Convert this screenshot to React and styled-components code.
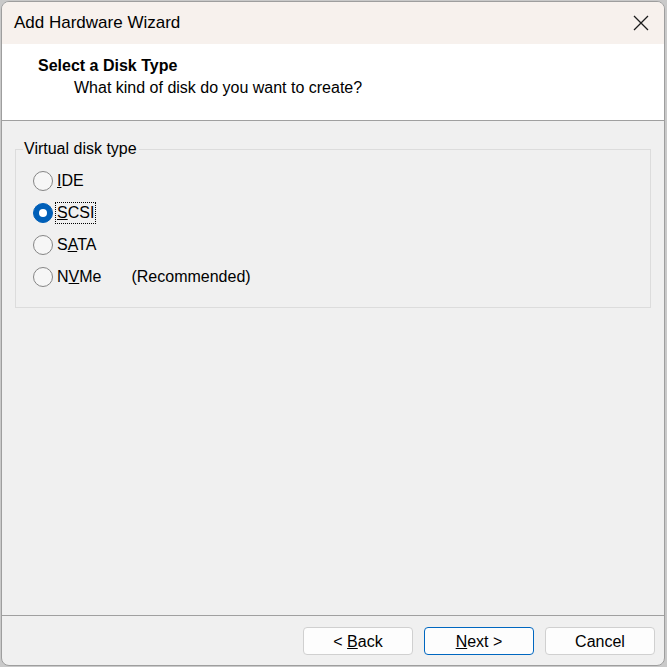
import React, { useState } from 'react'
import styled, { createGlobalStyle } from 'styled-components'

const GlobalStyle = createGlobalStyle`
    html, body {
        margin: 0;
        padding: 0;
        background: #c9c9c9;
    }
    body {
        font-family: "Liberation Sans", Arial, sans-serif;
        color: #000;
    }
`

const options = [
    { id: 'ide', label: 'IDE', key: 0 },
    { id: 'scsi', label: 'SCSI', key: 0 },
    { id: 'sata', label: 'SATA', key: 1 },
    { id: 'nvme', label: 'NVMe', key: 1, note: '(Recommended)' },
]

function Mnemonic({ text, index }) {
    return (
        <>
            {text.slice(0, index)}
            <u>{text[index]}</u>
            {text.slice(index + 1)}
        </>
    )
}

function App() {
    const [diskType, setDiskType] = useState('scsi')

    return (
        <>
            <GlobalStyle />
            <Window>
                <TitleBar>
                    <Title>Add Hardware Wizard</Title>
                    <CloseButton aria-label="Close">
                        <svg width="16" height="16" viewBox="0 0 16 16">
                            <path d="M1 1 L15 15 M15 1 L1 15" stroke="#1b1b1b" strokeWidth="1.3" fill="none" />
                        </svg>
                    </CloseButton>
                </TitleBar>
                <Header>
                    <Heading>Select a Disk Type</Heading>
                    <SubHeading>What kind of disk do you want to create?</SubHeading>
                </Header>
                <Body>
                    <GroupBox>
                        <Legend>Virtual disk type</Legend>
                        <RadioList>
                            {options.map(opt => (
                                <RadioRow key={opt.id} onClick={() => setDiskType(opt.id)}>
                                    <RadioCircle checked={diskType === opt.id} />
                                    <RadioLabel focused={diskType === opt.id}>
                                        <Mnemonic text={opt.label} index={opt.key} />
                                    </RadioLabel>
                                    {opt.note && <Note>{opt.note}</Note>}
                                </RadioRow>
                            ))}
                        </RadioList>
                    </GroupBox>
                </Body>
                <Footer>
                    <Button><span>&lt; </span><Mnemonic text="Back" index={0} /></Button>
                    <Button primary><Mnemonic text="Next" index={0} /><span> &gt;</span></Button>
                    <Button>Cancel</Button>
                </Footer>
            </Window>
        </>
    )
}

export default App

const Window = styled.div`
    box-sizing: border-box;
    width: 664px;
    height: 665px;
    margin: 1px 0 0 1px;
    border: 1px solid #9e9e9e;
    border-radius: 8px;
    overflow: hidden;
    display: flex;
    flex-direction: column;
    background: #f0f0f0;
`

const TitleBar = styled.div`
    height: 42px;
    flex-shrink: 0;
    display: flex;
    align-items: center;
    justify-content: space-between;
    padding: 0 15px 0 12px;
    background: #f7f1ed;
`

const Title = styled.div`
    font-size: 17px;
`

const CloseButton = styled.div`
    display: flex;
    align-items: center;
    justify-content: center;
    width: 16px;
    height: 16px;
`

const Header = styled.div`
    height: 77px;
    flex-shrink: 0;
    box-sizing: border-box;
    background: #ffffff;
    border-bottom: 1px solid #a0a0a0;
    padding: 12px 0 0 36px;
`

const Heading = styled.div`
    font-size: 16px;
    font-weight: bold;
    line-height: 20px;
`

const SubHeading = styled.div`
    font-size: 16px;
    line-height: 24px;
    padding-left: 36px;
`

const Body = styled.div`
    flex: 1;
    padding: 18px 13px 0 13px;
`

const GroupBox = styled.fieldset`
    margin: 0;
    padding: 6px 0 14px 0;
    border: 1px solid #dcdcdc;
    border-radius: 0;
`

const Legend = styled.legend`
    font-size: 16px;
    padding: 0 2px 0 1px;
    margin-left: 7px;
    line-height: 20px;
`

const RadioList = styled.div`
    padding-left: 17px;
`

const RadioRow = styled.div`
    display: flex;
    align-items: center;
    height: 32px;
    cursor: default;
`

const RadioCircle = styled.span`
    box-sizing: border-box;
    width: 20px;
    height: 20px;
    border-radius: 50%;
    flex-shrink: 0;
    margin-right: 3px;
    position: relative;
    background: ${props => props.checked ? '#005fb8' : '#f6f6f6'};
    border: ${props => props.checked ? '1px solid #005fb8' : '1px solid #858585'};

    &::after {
        content: '';
        display: ${props => props.checked ? 'block' : 'none'};
        position: absolute;
        width: 8px;
        height: 8px;
        border-radius: 50%;
        background: #ffffff;
        left: 5px;
        top: 5px;
    }
`

const RadioLabel = styled.span`
    font-size: 16px;
    line-height: 20px;
    padding: 0 1px;
    outline: ${props => props.focused ? '1px dotted #000' : 'none'};
    outline-offset: 0;
`

const Note = styled.span`
    font-size: 16px;
    margin-left: 29px;
`

const Footer = styled.div`
    height: 50px;
    flex-shrink: 0;
    box-sizing: border-box;
    border-top: 1px solid #a0a0a0;
    display: flex;
    justify-content: flex-end;
    align-items: flex-start;
    gap: 11px;
    padding: 11px 9px 0 0;
`

const Button = styled.button`
    box-sizing: border-box;
    width: 110px;
    height: 28px;
    font-family: "Liberation Sans", Arial, sans-serif;
    font-size: 16px;
    color: #000;
    background: #fdfdfd;
    border: 1px solid ${props => props.primary ? '#0067c0' : '#d0d0d0'};
    border-radius: 4px;
    padding: 2px 0 0 0;
    white-space: pre;
`
